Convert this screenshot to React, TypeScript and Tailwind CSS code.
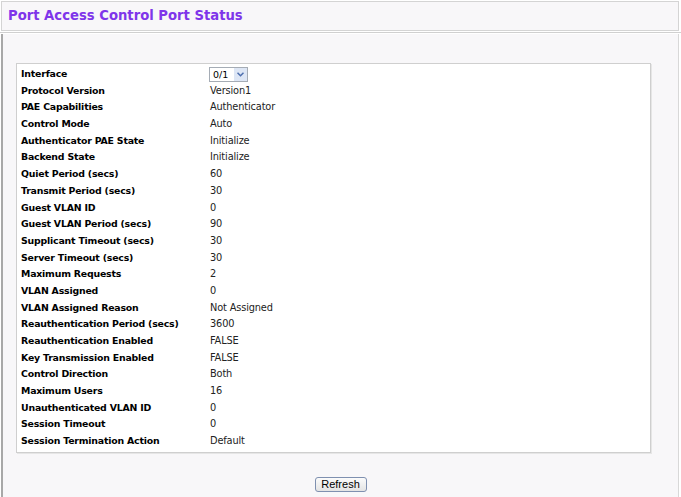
const rows: [string, string][] = [
  ['Protocol Version', 'Version1'],
  ['PAE Capabilities', 'Authenticator'],
  ['Control Mode', 'Auto'],
  ['Authenticator PAE State', 'Initialize'],
  ['Backend State', 'Initialize'],
  ['Quiet Period (secs)', '60'],
  ['Transmit Period (secs)', '30'],
  ['Guest VLAN ID', '0'],
  ['Guest VLAN Period (secs)', '90'],
  ['Supplicant Timeout (secs)', '30'],
  ['Server Timeout (secs)', '30'],
  ['Maximum Requests', '2'],
  ['VLAN Assigned', '0'],
  ['VLAN Assigned Reason', 'Not Assigned'],
  ['Reauthentication Period (secs)', '3600'],
  ['Reauthentication Enabled', 'FALSE'],
  ['Key Transmission Enabled', 'FALSE'],
  ['Control Direction', 'Both'],
  ['Maximum Users', '16'],
  ['Unauthenticated VLAN ID', '0'],
  ['Session Timeout', '0'],
  ['Session Termination Action', 'Default'],
];

function InterfaceSelect() {
  return (
    <div className="flex h-[15px] w-[39px] items-center border border-[#a5acb5] bg-white">
      <span className="flex-1 pl-[3px] text-[9.5px] leading-none text-black">0/1</span>
      <span className="flex h-[13px] w-[13px] items-center justify-center bg-[#dde6f5]">
        <svg width="7" height="5" viewBox="0 0 7 5">
          <path d="M0.5 0.8 L3.5 3.8 L6.5 0.8" fill="none" stroke="#4d6fae" strokeWidth="1.5" />
        </svg>
      </span>
    </div>
  );
}

export default function App() {
  return (
    <div
      className="h-[497px] w-[681px] overflow-hidden bg-white pt-[1px] text-black"
      style={{ fontFamily: '"DejaVu Sans", Verdana, sans-serif' }}
    >
      <div className="mx-[1px] mr-[2px] flex h-[30px] items-center border border-[#d4d4d4] bg-[#f8f7f9] px-[6px] pb-[1px]">
        <h1 className="text-[13.2px] font-bold text-[#7f35ea]">Port Access Control Port Status</h1>
      </div>
      <div className="mt-[1px] h-[2px] border-t border-[#d0d0d0] bg-white" />
      <div className="ml-[1px] mr-[2px] h-[470px] border-l-2 border-r border-b border-[#a8a8a8] border-r-[#d8d8d8] border-b-[#d8d8d8] bg-[#f8f7f9] pt-[29px]">
        <div className="ml-[13px] w-[635px] border border-[#cfcfcf] bg-white px-[4px] pt-[2px] pb-[2px] shadow-[1px_1px_0_#e6e6e6]">
          <div className="flex h-[16.7px] items-center">
            <span className="w-[188px] text-[9.4px] font-bold tracking-[-0.2px]">Interface</span>
            <InterfaceSelect />
          </div>
          {rows.map(([label, value]) => (
            <div key={label} className="flex h-[16.7px] items-baseline leading-[16.7px]">
              <span className="w-[189px] text-[9.4px] font-bold tracking-[-0.2px]">{label}</span>
              <span className="text-[9.8px] tracking-[-0.15px] text-[#222]">{value}</span>
            </div>
          ))}
        </div>
        <div className="mt-[24px] flex justify-center">
          <button
            className="h-[15px] w-[52px] rounded-[3px] border border-[#7f90b0] bg-gradient-to-b from-[#fbfbfb] to-[#e4e4e4] text-[11px] leading-none text-black"
            style={{ fontFamily: '"Liberation Sans", Arial, sans-serif' }}
          >
            Refresh
          </button>
        </div>
      </div>
    </div>
  );
}
